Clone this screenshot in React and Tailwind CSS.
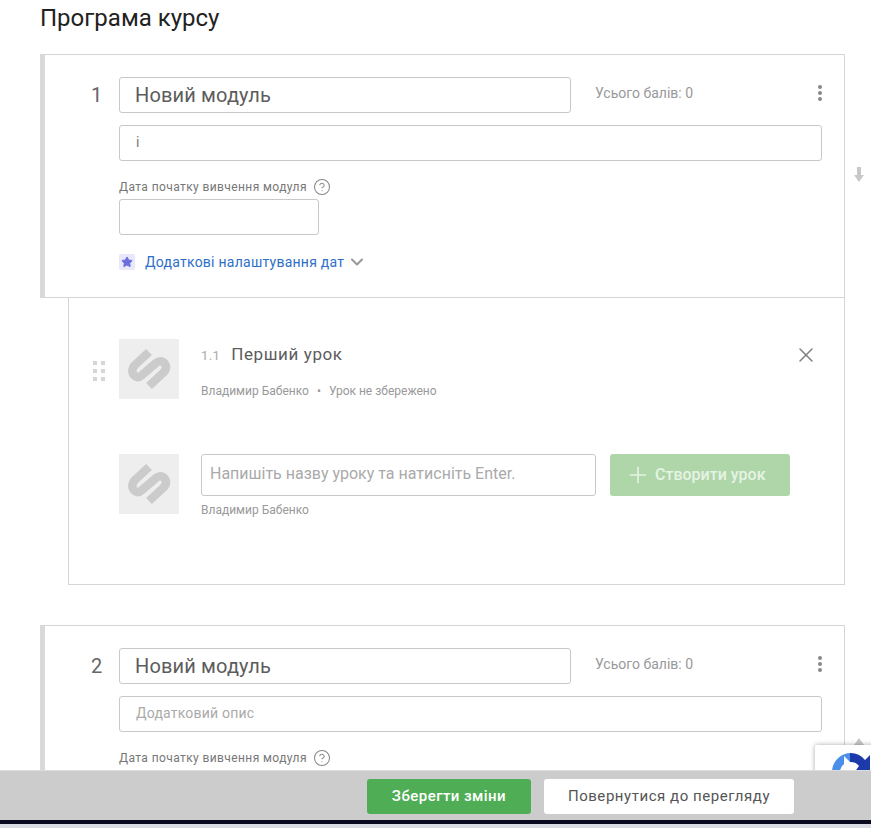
import { ChevronDown, Plus, X, CircleHelp, Star } from 'lucide-react'

const inputBase = 'block rounded-[3px] border border-[#c8c8c8] bg-white outline-none'

function Logo() {
  return (
    <div className="w-[60px] h-[60px] bg-[#eeeeee] shrink-0">
      <svg width="60" height="60" viewBox="0 0 60 60" fill="none" stroke="#cbcbcb" strokeWidth="8.5" strokeLinecap="butt" strokeLinejoin="round">
        <path d="M30 13 L16 26 C12 30 13 35 16 37 C19 39 21 38 23 36 L37 24 C39 22 42 22 44 23 C48 26 48 30 44 34 L30 47" />
      </svg>
    </div>
  )
}

function DragDots() {
  return (
    <div className="grid grid-cols-2 gap-x-[3px] gap-y-[4px] w-[12px] shrink-0">
      {[0, 1, 2, 3, 4, 5].map(i => <span key={i} className="w-[4px] h-[4px] bg-[#d6d6d6]" />)}
    </div>
  )
}

function MoveArrow({ up, className }) {
  return (
    <svg width="10" height="15" viewBox="0 0 10 15" fill="#c8c8c8" className={className}>
      {up
        ? <path d="M5 0 L10 7 L7 7 L7 15 L3 15 L3 7 L0 7 Z" />
        : <path d="M3 0 L7 0 L7 8 L10 8 L5 15 L0 8 L3 8 Z" />}
    </svg>
  )
}

function ModuleHead({ number, description, children }) {
  return (
    <div className="relative border border-[#d6d6d6] border-l-[5px] border-l-[#d9d9d9] bg-white pt-[22px]">
      <div className="flex items-center">
        <div className="w-[74px] pl-[46px] text-[20px] leading-none text-[#666]">{number}</div>
        <input
          readOnly
          defaultValue="Новий модуль"
          className={`${inputBase} w-[452px] h-[36px] px-[15px] text-[20px] tracking-[0.15px] text-[#5c5c5c]`}
        />
        <span className="ml-[24px] mb-[4px] text-[14px] text-[#999]">Усього балів: 0</span>
        <span className="ml-auto mr-[22px] mb-[4px] flex flex-col gap-[2px]">
          <i className="block w-[4px] h-[4px] rounded-full bg-[#888]" />
          <i className="block w-[4px] h-[4px] rounded-full bg-[#888]" />
          <i className="block w-[4px] h-[4px] rounded-full bg-[#888]" />
        </span>
      </div>
      <input
        readOnly
        defaultValue={description}
        placeholder="Додатковий опис"
        className={`${inputBase} ml-[74px] mt-[12px] w-[703px] h-[36px] px-[16px] pb-[2px] text-[14px] tracking-[0.2px] text-[#777] placeholder:text-[#aaa]`}
      />
      <div className="ml-[74px] mt-[17px] flex items-center gap-[6px] h-[18px] text-[12px] tracking-[0.4px] text-[#777]">
        Дата початку вивчення модуля
        <CircleHelp size={18} strokeWidth={1.4} className="text-[#888]" />
      </div>
      {children}
    </div>
  )
}

export default function App() {
  return (
    <div className="h-[828px] w-[871px] overflow-hidden flex flex-col bg-white font-['Roboto',sans-serif]">
      <div className="relative flex-1 overflow-hidden pl-[40px] pr-[26px]">
        <h2 className="h-[54px] pt-[3px] text-[24px] leading-[30px] text-[#222] font-normal">Програма курсу</h2>

        <ModuleHead number="1" description="і">
          <input readOnly className={`${inputBase} ml-[74px] mt-[3px] w-[200px] h-[36px]`} />
          <div className="ml-[74px] mt-[19px] mb-[27px] flex items-center h-[16px]">
            <span className="w-[16px] h-[16px] bg-[#e8e8fa] flex items-center justify-center rounded-[2px]">
              <Star size={12} fill="#6a6fdc" stroke="#6a6fdc" />
            </span>
            <span className="ml-[10px] text-[14px] tracking-[0.25px] text-[#2d6fc9]">Додаткові налаштування дат</span>
            <ChevronDown size={20} strokeWidth={2.5} className="ml-[3px] text-[#999]" />
          </div>
          <MoveArrow className="absolute right-[-20px] top-[112px]" />
        </ModuleHead>

        <div className="ml-[28px] h-[287px] border border-t-0 border-[#d6d6d6] bg-white pt-[41px]">
          <div className="relative flex">
            <div className="w-[50px] pl-[24px] flex items-center pt-[4px]"><DragDots /></div>
            <Logo />
            <div className="ml-[22px] flex-1">
              <div className="flex items-baseline pt-[3px]">
                <span className="text-[13px] text-[#aaa] tracking-[0.4px]">1.1</span>
                <span className="ml-[11px] text-[17px] tracking-[0.6px] text-[#5c5c5c]">Перший урок</span>
              </div>
              <div className="mt-[14px] flex items-center text-[12px] text-[#999]">
                Владимир Бабенко
                <span className="mx-[8px]">•</span>
                Урок не збережено
              </div>
            </div>
            <X size={24} strokeWidth={1.5} className="absolute right-[26px] top-[4px] text-[#808080]" />
          </div>

          <div className="mt-[54px] ml-[50px] flex">
            <Logo />
            <div className="ml-[22px]">
              <div className="flex">
                <input
                  readOnly
                  placeholder="Напишіть назву уроку та натисніть Enter."
                  className={`${inputBase} w-[395px] h-[42px] px-[8px] pb-[3px] text-[16px] placeholder:text-[#aaa]`}
                />
                <button className="ml-[14px] w-[180px] h-[42px] rounded-[3px] bg-[#aed6a9] text-[#e6f3e4] text-[16px] font-medium flex items-center pl-[15px]">
                  <Plus size={26} strokeWidth={1.5} className="mr-[4px]" />
                  Створити урок
                </button>
              </div>
              <div className="mt-[5px] text-[12px] text-[#999]">Владимир Бабенко</div>
            </div>
          </div>
        </div>

        <div className="mt-[40px]">
          <ModuleHead number="2" description="">
            <MoveArrow up className="absolute right-[-20px] top-[112px]" />
            <div className="h-[40px]" />
          </ModuleHead>
        </div>

        {/* recaptcha badge peeking out above the footer */}
        <div className="absolute left-[815px] top-[745px] w-[70px] h-[40px] bg-white rounded-[2px] shadow-[0_0_5px_rgba(0,0,0,0.35)] pl-[17px] pt-[8px]">
          <svg width="38" height="38" viewBox="0 0 38 38">
            <path d="M18 0 A19 19 0 0 0 0 19 L8 19 A10 10 0 0 1 18 9 Z" fill="#4a90e8" />
            <path d="M18 0 A19 19 0 0 1 33 7 L38 2 L38 20 L22 20 L27 13 A10 10 0 0 0 18 9 Z" fill="#1c3aa9" />
            <path d="M18 9 L12 3 L12 14 Z" fill="#fff" />
          </svg>
        </div>
      </div>

      <div className="h-[50px] bg-[#cccccc] border-t border-[#dcdcdc] flex items-start pt-[8px] pl-[367px] shrink-0 z-10">
        <button className="w-[164px] h-[35px] rounded-[3px] bg-[#4fad55] text-white text-[15px] font-medium tracking-[0.45px]">Зберегти зміни</button>
        <button className="ml-[13px] w-[250px] h-[35px] rounded-[3px] bg-white text-[#555] text-[15px] tracking-[0.55px]">Повернутися до перегляду</button>
      </div>
      <div className="h-[4px] bg-[#0a0a1e] shrink-0 z-10" />
      <div className="h-[4px] bg-[#d8dbe4] shrink-0 z-10" />
    </div>
  )
}
